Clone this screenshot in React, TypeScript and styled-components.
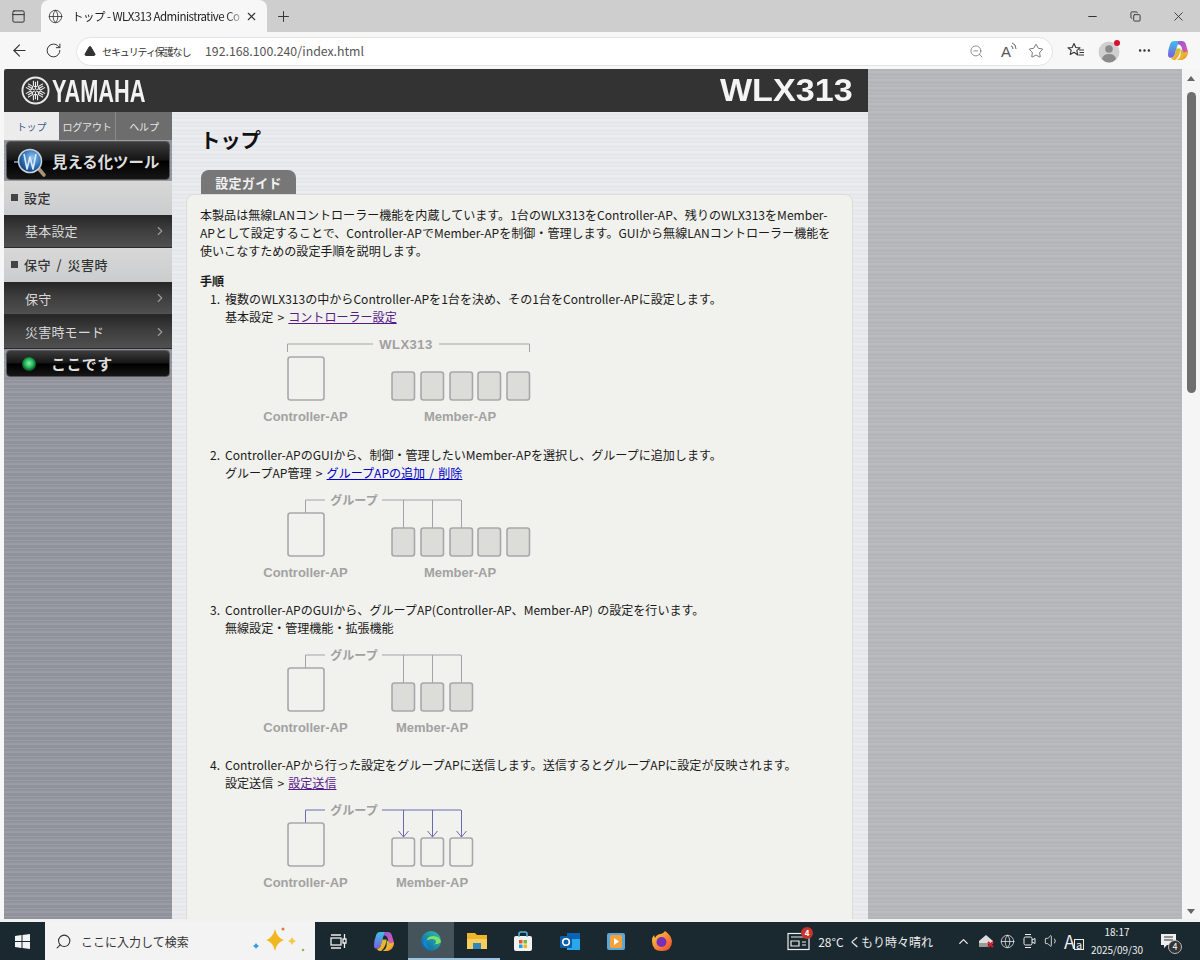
import React from 'react';
import styled, { createGlobalStyle, css } from 'styled-components';
import { ArrowLeft, ChevronRight, ChevronUp, Copy, Ellipsis, Globe, Minus, PanelTop, Plus, RotateCw, Search, Star, TriangleAlert, Volume1, X, ZoomOut } from 'lucide-react';

const UI = `"Noto Sans CJK JP", "Noto Sans", sans-serif`;
const Global = createGlobalStyle`
  html, body { margin: 0; padding: 0; overflow: hidden; background: #f7f7f7; }
  #root { width: 1200px; height: 960px; overflow: hidden; }
  * { box-sizing: border-box; }
`;
const stripes = (a: string, b: string) => css`
  background-image: repeating-linear-gradient(0deg, ${a} 0 2px, ${b} 2px 3px, ${a} 3px 6px, ${b} 6px 8px);
`;
const Screen = styled.div`
  width: 1200px; height: 960px; display: flex; flex-direction: column; font-family: ${UI}; color: #111; background: #f7f7f7;
`;
/* browser chrome */
const TitleBar = styled.div`height: 32px; background: #cecece; display: flex; align-items: center; flex: none;`;
const ChromeSlot = styled.div<{ $w: number }>`
  width: ${p => p.$w}px; height: 30px; display: flex; align-items: center; justify-content: center; flex: none; color: #333;
`;
const Tab = styled.div`
  width: 226px; height: 32px; margin-left: 5px; background: #f7f7f7; border-radius: 8px 8px 0 0; display: flex; align-items: center; padding-left: 6px; flex: none;
`;
const TabTitle = styled.div`
  width: 170px; font-size: 11.5px; letter-spacing: -.52px; color: #222; white-space: nowrap; margin-left: 9px; flex: none;
  -webkit-mask-image: linear-gradient(90deg, #000 90%, rgba(0,0,0,.25));
`;
const WindowButtons = styled.div`margin-left: auto; display: flex;`;
const Toolbar = styled.div`height: 37px; background: #f7f7f7; display: flex; align-items: center; padding-left: 2px; flex: none;`;
const AddressBar = styled.div`
  width: 977px; height: 29px; margin-left: 6px; margin-top: 1px; background: #fff; border: 1px solid #e3e3e3; border-radius: 15px; display: flex; align-items: center; padding: 0 1px 0 7px; flex: none;
`;
const Warn = styled.span`font-size: 10px; letter-spacing: -1.1px; color: #333; margin-left: 6px; width: 103px; white-space: nowrap; flex: none;`;
const Url = styled.span`font-size: 12.3px; color: #555; white-space: nowrap;`;
const AddressEnd = styled.div`margin-left: auto; display: flex; color: #555;`;
const ReadAloud = styled.span`font-size: 15px; color: #555; font-family: "Liberation Sans", sans-serif; position: relative; line-height: 1;`;
const Waves = styled.svg`position: absolute; left: 9px; top: -2px;`;
/* page */
const Viewport = styled.div`height: 850px; display: flex; flex: none; overflow: hidden; padding-left: 4px; background: #f7f7f7;`;
const Page = styled.div`flex: 1; min-width: 0; display: flex; overflow: hidden; background: #b5b7bb; ${stripes('#b3b5b9', '#b9bbbf')}`;
const Device = styled.div`width: 864px; flex: none; display: flex; flex-direction: column; overflow: hidden;`;
const Brand = styled.header`
  height: 43px; flex: none; background: #333; border-radius: 3px 0 0 0; display: flex; align-items: center; justify-content: space-between; padding: 0 15px 0 17px; color: #fff; overflow: hidden;
`;
const Logo = styled.div`display: flex; align-items: center; gap: 2px;`;
const YamahaWord = styled.span`
  font: 700 32px/1 "Liberation Sans", sans-serif; display: inline-block; transform: scaleX(.68); transform-origin: left center; width: 93px; white-space: nowrap; color: #f2f2f2;
`;
const Model = styled.span`
  font: 700 31px/1 "Liberation Sans", sans-serif; display: inline-block; transform: scaleX(1.1); transform-origin: right center; color: #f4f4f4;
`;
const Body = styled.div`flex: 1; display: flex; min-height: 0;`;
const Side = styled.nav`
  width: 168px; flex: none; display: flex; flex-direction: column; background: #94979e; ${stripes('#90939b', '#9a9da3')}
`;
const NavTabs = styled.div`display: grid; grid-template-columns: 55px 57px 56px; height: 28px; flex: none; background: #6d6d6d;`;
const NavTab = styled.div<{ $on?: boolean }>`
  display: flex; align-items: center; justify-content: center; font-size: 10px; letter-spacing: -.2px;
  color: ${p => (p.$on ? '#3b5d90' : '#e6e6e6')}; background: ${p => (p.$on ? '#ececec' : '#6d6d6d')};
  border-right: ${p => (p.$on ? 'none' : '1px solid #8a8a8a')};
  &:last-child { border-right: none; }
`;
const BlackButton = styled.div<{ $h: number }>`
  height: ${p => p.$h}px; margin: 1px 2px; flex: none; border-radius: 4px; border: 1px solid #555; display: flex; align-items: center; color: #ddd; font-weight: 700;
  background: linear-gradient(#3c3c3c 0, #151515 48%, #000 52%, #161616 100%);
`;
const ToolLabel = styled.span`font-size: 15.4px; margin-left: 1px; white-space: nowrap;`;
const HereLabel = styled.span`font-size: 15px; letter-spacing: .4px; margin-left: 14px;`;
const SectionHead = styled.div`
  height: 33.5px; flex: none; display: flex; align-items: center; padding-left: 7px; gap: 6px; font-size: 13px; font-weight: 500; color: #333; letter-spacing: .5px; word-spacing: 2px;
  background: linear-gradient(#d8d8d8, #cbccce);
`;
const Square = styled.span`width: 7px; height: 7px; background: #444; flex: none;`;
const NavItem = styled.div`
  height: 33.7px; flex: none; display: flex; align-items: center; justify-content: space-between; padding: 0 5px 0 21px; font-size: 13px; color: #d8d8d8; letter-spacing: .2px; border-bottom: 1px solid #2a2a2a;
  background: linear-gradient(#262626 0, #3d3d3d 45%, #505050 100%);
`;
const Main = styled.main`flex: 1; min-width: 0; background: #e8eaee; ${stripes('#e5e7eb', '#ebedf0')} padding: 0 15px 0 14px;`;
const Heading = styled.h1`font-size: 20.5px; font-weight: 700; letter-spacing: -.3px; margin: 12px 0 0 14px; line-height: 30px; color: #111;`;
const SheetTab = styled.div`
  width: 95px; height: 24px; margin: 16px 0 0 15px; border-radius: 8px 8px 0 0; background: #777; color: #f0f0f0; font-size: 13px; font-weight: 700; display: flex; align-items: center; justify-content: center; letter-spacing: .3px;
`;
const Sheet = styled.section`
  border: 1px solid #dcdcd8; border-radius: 8px 8px 0 0; background: #f1f1ed; padding: 11px 13px 40px; font-size: 12.05px; word-spacing: 1.5px; line-height: 18px; color: #1a1a1a;
`;
const Intro = styled.p`margin: 0 0 12px; white-space: nowrap;`;
const StepsHead = styled.div`font-weight: 700;`;
const Steps = styled.ol`margin: 0; padding: 0; list-style: none;`;
const Step = styled.li`
  display: grid; grid-template-columns: 20px 1fr; column-gap: 5px; height: 155.5px;
  &:last-child { margin-top: -1px; }
`;
const StepNo = styled.span`text-align: right;`;
const StepBody = styled.div`white-space: nowrap;`;
const DocLink = styled.a<{ $seen?: boolean }>`color: ${p => (p.$seen ? '#551a8b' : '#0000c8')}; text-decoration: underline;`;
const Figure = styled.svg`display: block; margin-left: 30px;`;
/* scrollbar */
const ScrollBar = styled.div`width: 18px; flex: none; background: #f5f5f5; display: flex; flex-direction: column; align-items: center; padding: 7px 0 5px;`;
const Arrow = styled.span<{ $down?: boolean }>`
  width: 0; height: 0; border-left: 4px solid transparent; border-right: 4px solid transparent; flex: none;
  ${p => (p.$down ? 'border-top: 5px solid #666; margin-top: auto;' : 'border-bottom: 5px solid #666;')}
`;
const Thumb = styled.div`width: 9px; height: 301px; margin-top: 11px; border-radius: 5px; background: #6e6e6e; flex: none;`;
const Seam = styled.div`height: 3px; background: #f1f1f1; flex: none;`;
/* taskbar */
const TaskBar = styled.footer`height: 38px; flex: none; background: #1a2830; display: flex; align-items: center; color: #eee;`;
const Start = styled.div`width: 45px; height: 38px; display: flex; align-items: center; justify-content: center; flex: none;`;
const SearchBox = styled.div`
  width: 270px; height: 38px; background: #f3f3f3; display: flex; align-items: center; padding-left: 10px; gap: 9px; color: #333; font-size: 12px; flex: none;
`;
const Sparkle = styled.svg`margin-left: auto; margin-right: 8px;`;
const Mirrored = styled.span`display: flex; transform: scaleX(-1);`;
const AppSlot = styled.div<{ $active?: boolean; $line?: boolean }>`
  width: 46.3px; height: 38px; display: flex; align-items: center; justify-content: center; flex: none;
  background: ${p => (p.$active ? '#45535b' : 'transparent')};
  box-shadow: ${p => (p.$line ? 'inset 0 -2px 0 #9cc3e0' : 'none')};
`;
const Tray = styled.div`margin-left: auto; display: flex; align-items: center; height: 38px; padding-right: 23px;`;
const Weather = styled.div`display: flex; align-items: center; font-size: 12px; margin-right: 18px; white-space: nowrap; color: #eee;`;
const News = styled.span`position: relative; display: flex; margin-right: 8px;`;
const Badge = styled.span`
  position: absolute; right: -3px; top: -5px; width: 12px; height: 12px; border-radius: 50%; background: #c8342c; color: #fff; font-size: 8px; line-height: 12px; text-align: center; font-weight: 700;
`;
const TrayIcon = styled.span<{ $w: number }>`width: ${p => p.$w}px; display: flex; justify-content: center; align-items: baseline; flex: none; font-size: 18px; line-height: 1;`;
const SmallA = styled.span`font-size: 11px; border: 1px solid #eee; line-height: 9px; padding: 0 1px; margin-left: -1px;`;
const Clock = styled.div`width: 62px; text-align: center; font-size: 10px; line-height: 18px; flex: none;`;
const Notify = styled.span`position: relative; margin-left: 12px; display: flex;`;
const NotifyCount = styled.span`
  position: absolute; right: -5px; bottom: -5px; width: 14px; height: 14px; border-radius: 50%; border: 1px solid #bbb; background: #333; color: #fff; font-size: 9px; line-height: 12px; text-align: center;
`;

const YamahaMark = () => (
  <svg width="29" height="29" viewBox="0 0 28 28" fill="none" stroke="#e8e8e8">
    <circle cx="14" cy="14" r="12.6" strokeWidth="1.8" />
    {[0, 60, 120, 180, 240, 300].map(a => (
      <g key={a} transform={`rotate(${a} 14 14)`} strokeWidth="1.1">
        <path d="M14 13V5.5M12 9.5V4.5M16 9.5V4.5M12 9.5Q14 11 16 9.5" />
      </g>
    ))}
  </svg>
);
const ToolIcon = () => (
  <svg width="44" height="34" viewBox="0 0 44 34">
    <defs><radialGradient id="tg" cx=".6" cy=".35" r=".75"><stop offset="0" stopColor="#8fc4ee" /><stop offset=".55" stopColor="#2c6fb5" /><stop offset="1" stopColor="#0c2f5c" /></radialGradient></defs>
    <path d="M7 18h5M31 23l4 4" stroke="#7fa8cc" strokeWidth="1.6" />
    <path d="M31 24l6 7" stroke="#a99277" strokeWidth="3.5" strokeLinecap="round" />
    <circle cx="23" cy="17" r="11.500" fill="url(#tg)" stroke="#c2d0dc" strokeWidth="1.6" />
    <path d="M17 10l3 15 3-12 3 12 3-15" fill="none" stroke="#dbe9f5" strokeWidth="1.6" strokeLinejoin="round" />
  </svg>
);
const HereDot = () => (
  <svg width="16" height="16" viewBox="0 0 16 16" style={{ marginLeft: 14 }}>
    <defs><radialGradient id="hd" cx=".5" cy=".45"><stop offset="0" stopColor="#8cf0a8" /><stop offset=".6" stopColor="#22b85a" /><stop offset="1" stopColor="#0d5a2b" /></radialGradient></defs>
    <circle cx="8" cy="8" r="7" fill="url(#hd)" />
  </svg>
);
const CopilotIcon = ({ s = 21, id }: { s?: number; id: string }) => (
  <svg width={s} height={s} viewBox="0 0 20 20">
    <defs>
      <linearGradient id={`${id}a`} x1="0" y1="0" x2="0" y2="1"><stop offset="0" stopColor="#3ec0e8" /><stop offset="1" stopColor="#7a5ce0" /></linearGradient>
      <linearGradient id={`${id}b`} x1="0" y1="0" x2="1" y2="1"><stop offset="0" stopColor="#8d5be0" /><stop offset="1" stopColor="#e85a9a" /></linearGradient>
      <linearGradient id={`${id}c`} x1="0" y1="0" x2="1" y2="1"><stop offset="0" stopColor="#8cc84a" /><stop offset=".6" stopColor="#f2b52c" /><stop offset="1" stopColor="#ee6a3c" /></linearGradient>
    </defs>
    <path d="M6 1h6q-2 1-3 4l-3 10q-1 2-3 2-3 0-3-3 0-5 2-10 1-3 4-3z" fill={`url(#${id}a)`} />
    <path d="M10 1h3q3 0 4 3l2 7q0 3-2 3-2 0-3-2l-1-5q-1-3-4-3z" fill={`url(#${id}b)`} />
    <path d="M8 8h4l-1 5q-1 3-4 6H6q-3 0-3-2 2 0 3-2z" fill={`url(#${id}c)`} />
    <path d="M12 9q2 0 3 3l4-1q0 4-2 6t-4 2H8q3-1 4-5z" fill={`url(#${id}c)`} />
  </svg>
);
const Diagram = ({ title, count = 5, links = 3, filled = 5, arrows = false, bracket = false }: { title: string; count?: number; links?: number; filled?: number; arrows?: boolean; bracket?: boolean }) => {
  const line = arrows ? '#6a6ab4' : '#a3a3a3';
  const xs = [136, 165, 194, 222, 251];
  const top = 18;
  const box = top + 13;
  const memberTop = box + 15;
  const memberCx = count === 5 ? 205 : 177;
  return (
    <Figure width="300" height="108" viewBox="0 0 300 108" fill="none">
      {bracket ? (
        <path d={`M32.5 ${top + 8}V${top}H118M184 ${top}H274.5V${top + 8}`} stroke={line} />
      ) : (
        <path d={`M50.5 ${box}V${top}H70M127 ${top}H206`} stroke={line} />
      )}
      {bracket ? (
        <text x="151" y={top + 4.5} textAnchor="middle" fontFamily='"Liberation Sans", sans-serif' fontWeight="700" fontSize="13" letterSpacing=".5" fill="#a0a0a0">{title}</text>
      ) : (
        <text x="99" y={top + 4.5} textAnchor="middle" fontFamily={UI} fontWeight="700" fontSize="12" fill="#a0a0a0">{title}</text>
      )}
      {!bracket && xs.slice(0, links).map(x => (
        <path key={x} d={`M${x + 12.5} ${top}V${memberTop - (arrows ? 1 : 0)}${arrows ? 'm-5-6l5 6 5-6' : ''}`} stroke={line} />
      ))}
      <rect x="33" y={box} width="36" height="43" rx="2.5" stroke="#a8a8a8" strokeWidth="1.6" />
      {xs.slice(0, count).map((x, i) => (
        <rect key={x} x={x + 1} y={memberTop} width="22.5" height="28" rx="2.5" stroke="#a8a8a8" strokeWidth="1.6" fill={i < filled ? '#dcdcd9' : 'none'} />
      ))}
      <text x="50.5" y={box + 64} textAnchor="middle" fontFamily='"Liberation Sans", sans-serif' fontWeight="700" fontSize="13" fill="#a2a2a2">Controller-AP</text>
      <text x={memberCx} y={box + 64} textAnchor="middle" fontFamily='"Liberation Sans", sans-serif' fontWeight="700" fontSize="13" fill="#a2a2a2">Member-AP</text>
    </Figure>
  );
};

export default function App() {
  return (
    <Screen>
      <Global />
      <TitleBar>
        <ChromeSlot $w={36}><PanelTop size={15} strokeWidth={1.6} /></ChromeSlot>
        <Tab>
          <ChromeSlot $w={16}><Globe size={15} strokeWidth={1.3} /></ChromeSlot>
          <TabTitle>トップ - WLX313 Administrative Co</TabTitle>
          <ChromeSlot $w={18}><X size={13} /></ChromeSlot>
        </Tab>
        <ChromeSlot $w={32}><Plus size={17} strokeWidth={1.4} /></ChromeSlot>
        <WindowButtons>
          <ChromeSlot $w={43}><Minus size={13} /></ChromeSlot>
          <ChromeSlot $w={43}><Copy size={11} /></ChromeSlot>
          <ChromeSlot $w={43}><X size={15} strokeWidth={1.4} /></ChromeSlot>
        </WindowButtons>
      </TitleBar>
      <Toolbar>
        <ChromeSlot $w={34}><ArrowLeft size={19} strokeWidth={1.4} /></ChromeSlot>
        <ChromeSlot $w={34}><RotateCw size={17} strokeWidth={1.4} /></ChromeSlot>
        <AddressBar>
          <TriangleAlert size={12} fill="#333" stroke="#333" />
          <Warn>セキュリティ保護なし</Warn>
          <Url>192.168.100.240/index.html</Url>
          <AddressEnd>
            <ChromeSlot $w={30}><ZoomOut size={15} strokeWidth={1.3} color="#777" /></ChromeSlot>
            <ChromeSlot $w={30}>
              <ReadAloud>A<Waves width="8" height="8" viewBox="0 0 8 8" fill="none" stroke="#666"><path d="M1 4Q3 4 3 7M2 1Q6 2 6 7" /></Waves></ReadAloud>
            </ChromeSlot>
            <ChromeSlot $w={30}><Star size={16} strokeWidth={1.2} color="#555" /></ChromeSlot>
          </AddressEnd>
        </AddressBar>
        <ChromeSlot $w={6} />
        <ChromeSlot $w={34}>
          <svg width="18" height="17" viewBox="0 0 18 17" fill="none" stroke="#333" strokeWidth="1.1" strokeLinejoin="round">
            <path d="M7 1.500l1.800 4 4.200.4-3.200 2.800 1 4.300L7 10.300l-3.800 2.200 1-4.300L1 5.900l4.200-.4z" />
            <path d="M12 8h5M12.500 10.500H17M11.500 13H17" />
          </svg>
        </ChromeSlot>
        <ChromeSlot $w={34}>
          <svg width="24" height="24" viewBox="0 0 24 24">
            <circle cx="11" cy="13" r="10.500" fill="#cfcfcf" />
            <circle cx="11" cy="10" r="3.800" fill="#8a8a8a" />
            <path d="M4 20q1-5 7-5t7 5q-3 3.500-7 3.500T4 20z" fill="#8a8a8a" />
            <circle cx="19" cy="4" r="3" fill="#d8102c" />
          </svg>
        </ChromeSlot>
        <ChromeSlot $w={34}><Ellipsis size={15} /></ChromeSlot>
        <ChromeSlot $w={34}><CopilotIcon id="cp1" /></ChromeSlot>
      </Toolbar>
      <Viewport>
        <Page>
          <Device>
            <Brand>
              <Logo><YamahaMark /><YamahaWord>YAMAHA</YamahaWord></Logo>
              <Model>WLX313</Model>
            </Brand>
            <Body>
              <Side>
                <NavTabs>
                  <NavTab $on>トップ</NavTab>
                  <NavTab>ログアウト</NavTab>
                  <NavTab>ヘルプ</NavTab>
                </NavTabs>
                <BlackButton $h={39}><ToolIcon /><ToolLabel>見える化ツール</ToolLabel></BlackButton>
                <SectionHead><Square />設定</SectionHead>
                <NavItem>基本設定<ChevronRight size={14} color="#999" /></NavItem>
                <SectionHead><Square />保守 / 災害時</SectionHead>
                <NavItem>保守<ChevronRight size={14} color="#999" /></NavItem>
                <NavItem>災害時モード<ChevronRight size={14} color="#999" /></NavItem>
                <BlackButton $h={27}><HereDot /><HereLabel>ここです</HereLabel></BlackButton>
              </Side>
              <Main>
                <Heading>トップ</Heading>
                <SheetTab>設定ガイド</SheetTab>
                <Sheet>
                  <Intro>
                    本製品は無線LANコントローラー機能を内蔵しています。1台のWLX313をController-AP、残りのWLX313をMember-<br />
                    APとして設定することで、Controller-APでMember-APを制御・管理します。GUIから無線LANコントローラー機能を<br />
                    使いこなすための設定手順を説明します。
                  </Intro>
                  <StepsHead>手順</StepsHead>
                  <Steps>
                    <Step>
                      <StepNo>1.</StepNo>
                      <StepBody>
                        複数のWLX313の中からController-APを1台を決め、その1台をController-APに設定します。<br />
                        基本設定 &gt; <DocLink $seen href="#">コントローラー設定</DocLink>
                        <Diagram title="WLX313" bracket filled={5} />
                      </StepBody>
                    </Step>
                    <Step>
                      <StepNo>2.</StepNo>
                      <StepBody>
                        Controller-APのGUIから、制御・管理したいMember-APを選択し、グループに追加します。<br />
                        グループAP管理 &gt; <DocLink href="#">グループAPの追加 / 削除</DocLink>
                        <Diagram title="グループ" />
                      </StepBody>
                    </Step>
                    <Step>
                      <StepNo>3.</StepNo>
                      <StepBody>
                        Controller-APのGUIから、グループAP(Controller-AP、Member-AP) の設定を行います。<br />
                        無線設定・管理機能・拡張機能
                        <Diagram title="グループ" count={3} filled={3} />
                      </StepBody>
                    </Step>
                    <Step>
                      <StepNo>4.</StepNo>
                      <StepBody>
                        Controller-APから行った設定をグループAPに送信します。送信するとグループAPに設定が反映されます。<br />
                        設定送信 &gt; <DocLink $seen href="#">設定送信</DocLink>
                        <Diagram title="グループ" count={3} filled={0} arrows />
                      </StepBody>
                    </Step>
                  </Steps>
                </Sheet>
              </Main>
            </Body>
          </Device>
        </Page>
        <ScrollBar>
          <Arrow />
          <Thumb />
          <Arrow $down />
        </ScrollBar>
      </Viewport>
      <Seam />
      <TaskBar>
        <Start>
          <svg width="15" height="15" viewBox="0 0 15 15" fill="#f4f4f4"><path d="M0 2l6.500-1v6H0zM7.500 1L15 0v7H7.500zM0 8h6.500v6L0 13zM7.500 8H15v7l-7.500-1z" /></svg>
        </Start>
        <SearchBox>
          <Mirrored><Search size={17} strokeWidth={1.5} /></Mirrored>
          ここに入力して検索
          <Sparkle width="56" height="30" viewBox="0 0 56 30">
            <path d="M24 3q2 9 9 11-7 2-9 11-2-9-9-11 7-2 9-11z" fill="#f2b71f" />
            <path d="M41 11q1 3 4 4-3 1-4 4-1-3-4-4 3-1 4-4z" fill="#f2c94c" />
            <path d="M5 17q1 2 3 3-2 1-3 3-1-2-3-3 2-1 3-3z" fill="#2f9fe0" />
            <circle cx="32" cy="3" r="1.500" fill="#e07a3c" /><circle cx="52" cy="24" r="1.300" fill="#8dbb5a" />
          </Sparkle>
        </SearchBox>
        <AppSlot>
          <svg width="17" height="17" viewBox="0 0 17 17" fill="none" stroke="#eee" strokeWidth="1.3"><rect x="1" y="5" width="10" height="7" /><path d="M1 2h10M1 15h10M14.500 1v5M14.500 10v5M13 6h3v4h-3z" /></svg>
        </AppSlot>
        <AppSlot><CopilotIcon id="cp2" /></AppSlot>
        <AppSlot $active $line>
          <svg width="22" height="22" viewBox="0 0 22 22">
            <defs><linearGradient id="eg" x1="0" y1="1" x2="1" y2="0"><stop offset="0" stopColor="#0c59a4" /><stop offset="1" stopColor="#2fc4a8" /></linearGradient></defs>
            <circle cx="11" cy="11" r="10" fill="url(#eg)" />
            <path d="M21 12q-1-6-8-6-6 0-7 6 2-3 6-3 4 0 4 3 0 2-3 2 5 1 8-2z" fill="#7fe06a" />
            <path d="M8 10q-3 5 2 9-6-1-7-7 1-4 5-2z" fill="#1583d8" />
          </svg>
        </AppSlot>
        <AppSlot $line>
          <svg width="22" height="20" viewBox="0 0 22 20"><path d="M1 2h8l2 2h10v14H1z" fill="#f0b429" /><path d="M1 8h20v10H1z" fill="#f7cf5e" /><path d="M7 12h8v6H7z" fill="#2f88b8" /></svg>
        </AppSlot>
        <AppSlot>
          <svg width="20" height="21" viewBox="0 0 20 21"><rect x="1" y="5" width="18" height="15" rx="2" fill="#f2f2f2" /><path d="M6 6V3q0-2 2-2h4q2 0 2 2v3" fill="none" stroke="#5ab4e0" strokeWidth="1.500" /><path d="M6 9h3.500v3.500H6z" fill="#e9572c" /><path d="M10.500 9H14v3.500h-3.500z" fill="#7cb82f" /><path d="M6 13.500h3.500V17H6z" fill="#1ba1e2" /><path d="M10.500 13.500H14V17h-3.500z" fill="#f2b71f" /></svg>
        </AppSlot>
        <AppSlot>
          <svg width="22" height="21" viewBox="0 0 22 21"><path d="M8 2h13v17H8z" fill="#28a8ea" /><path d="M8 2h13v6H8z" fill="#0a64b4" /><rect x="1" y="5" width="12" height="12" rx="1" fill="#0f5fa8" /><circle cx="7" cy="11" r="3.300" fill="none" stroke="#fff" strokeWidth="1.600" /></svg>
        </AppSlot>
        <AppSlot>
          <svg width="20" height="21" viewBox="0 0 20 21"><rect x="1" y="2" width="18" height="17" rx="2" fill="#5ba6d6" /><rect x="4" y="4" width="12" height="13" rx="1.500" fill="#f3a23a" /><path d="M8 7l5 3.500-5 3.500z" fill="#fff" /></svg>
        </AppSlot>
        <AppSlot>
          <svg width="22" height="22" viewBox="0 0 22 22">
            <defs><linearGradient id="ff" x1="0" y1="0" x2="1" y2="1"><stop offset="0" stopColor="#ffd23c" /><stop offset="1" stopColor="#f0452e" /></linearGradient></defs>
            <path d="M14 1q6 4 7 10 0 10-10 10T1 11q0-4 2-6l1 3q2-4 6-4 3-1 4-3z" fill="url(#ff)" />
            <circle cx="10.500" cy="12" r="5" fill="#7a2fb8" />
          </svg>
        </AppSlot>
        <Tray>
          <Weather>
            <News>
              <svg width="23" height="19" viewBox="0 0 23 19" fill="none" stroke="#eee" strokeWidth="1.2"><rect x="1" y="1.500" width="21" height="16" /><path d="M4 5h15M4 9h8v5H4zM15 10h4M15 13h4" /></svg>
              <Badge>4</Badge>
            </News>
            28°C&nbsp;&nbsp;くもり時々晴れ
          </Weather>
          <TrayIcon $w={24}><ChevronUp size={15} /></TrayIcon>
          <TrayIcon $w={22}>
            <svg width="16" height="14" viewBox="0 0 16 14"><path d="M1 7l7-6 7 6v3H1z" fill="#ddd" /><rect x="1" y="9" width="9" height="4" fill="#999" /><path d="M10 8l5 5M15 8l-5 5" stroke="#d8202c" strokeWidth="2" /></svg>
          </TrayIcon>
          <TrayIcon $w={21}><Globe size={15} strokeWidth={1.2} /></TrayIcon>
          <TrayIcon $w={23}>
            <svg width="15" height="16" viewBox="0 0 15 16" fill="none" stroke="#eee"><rect x="2" y="4" width="8" height="8" rx="1.500" /><path d="M3 1.500h6M3 14.500h6M10 7l3-1.500v5L10 9" /></svg>
          </TrayIcon>
          <TrayIcon $w={21}><Volume1 size={16} strokeWidth={1.3} /></TrayIcon>
          <TrayIcon $w={24}>A<SmallA>a</SmallA></TrayIcon>
          <Clock>18:17<br />2025/09/30</Clock>
          <Notify>
            <svg width="17" height="16" viewBox="0 0 17 16"><path d="M1 1h15v11H7l-3 3v-3H1z" fill="#eee" /><path d="M4 4h9M4 7h9" stroke="#333" /></svg>
            <NotifyCount>4</NotifyCount>
          </Notify>
        </Tray>
      </TaskBar>
    </Screen>
  );
}
